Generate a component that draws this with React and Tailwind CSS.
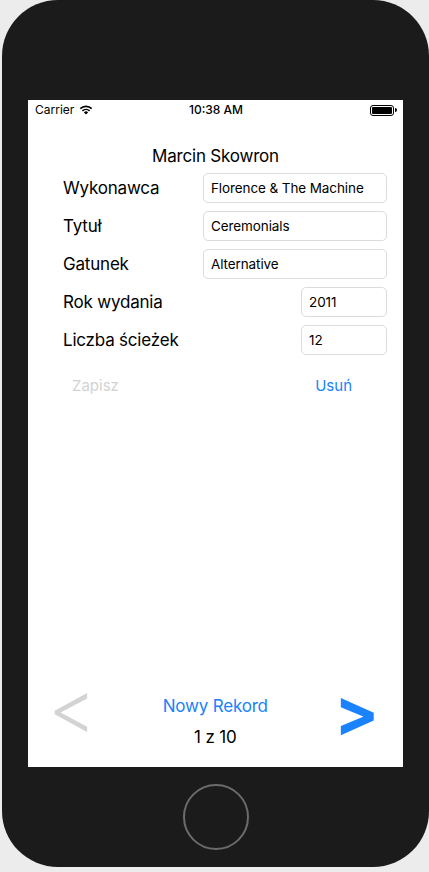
const rows = [
  { label: 'Wykonawca', value: 'Florence & The Machine', wide: true },
  { label: 'Tytuł', value: 'Ceremonials', wide: true },
  { label: 'Gatunek', value: 'Alternative', wide: true },
  { label: 'Rok wydania', value: '2011', wide: false },
  { label: 'Liczba ścieżek', value: '12', wide: false },
]

function Wifi() {
  return (
    <svg width="14" height="10" viewBox="0 0 14 10">
      <path d="M7 9.6 L4.9 7.4 A3 3 0 0 1 9.1 7.4 Z" fill="#000" />
      <path d="M3.4 5.9 A5.2 5.2 0 0 1 10.6 5.9" stroke="#000" strokeWidth="1.6" fill="none" />
      <path d="M1.3 3.7 A8.2 8.2 0 0 1 12.7 3.7" stroke="#000" strokeWidth="1.6" fill="none" />
    </svg>
  )
}

function Battery() {
  return (
    <div className="flex items-center">
      <div className="w-[24px] h-[11px] rounded-[3px] border border-black p-[1px]">
        <div className="w-full h-full bg-black rounded-[1px]" />
      </div>
      <div className="w-[1.5px] h-[4px] bg-black ml-[1px] rounded-r-sm" />
    </div>
  )
}

export default function App() {
  return (
    <div
      className="w-[429px] h-[872px] bg-[#ececec] overflow-hidden"
      style={{ fontFamily: 'Inter, "Noto Sans", sans-serif' }}
    >
      <div className="ml-[2px] w-[427px] h-[867px] rounded-[56px] bg-[#1b1b1b] pt-[100px] pl-[26px] flex flex-col">
        <div className="w-[375px] h-[667px] bg-white flex flex-col">
          {/* status bar */}
          <div className="h-[20px] flex items-center justify-between pl-[7px] pr-[6px] text-[12px] text-black">
            <div className="flex items-center gap-[5px] w-[120px]">
              <span>Carrier</span>
              <Wifi />
            </div>
            <span className="font-medium">10:38 AM</span>
            <div className="w-[120px] flex justify-end">
              <Battery />
            </div>
          </div>

          <div className="mt-[26px] text-center text-[17px] tracking-[-0.2px] text-black leading-[20px]">Marcin Skowron</div>

          <div className="mt-[7px] flex flex-col gap-[8px] pl-[35px] pr-[16px]">
            {rows.map((r) => (
              <div key={r.label} className="flex items-center justify-between h-[30px]">
                <span className="text-[17px] tracking-[-0.2px] text-black pt-[1px]">{r.label}</span>
                <div
                  className={`${r.wide ? 'w-[184px]' : 'w-[86px]'} h-[30px] rounded-[5px] border border-[#dcdcdc] flex items-center px-[7px] text-[13.5px] tracking-[-0.1px] text-black`}
                >
                  {r.value}
                </div>
              </div>
            ))}
          </div>

          <div className="mt-[21px] flex justify-between pl-[44px] pr-[51px] text-[15px] leading-[20px]">
            <span className="text-[#d2d2d2]">Zapisz</span>
            <span className="text-[#1a82fb]">Usuń</span>
          </div>

          <div className="flex-1" />

          <div className="h-[80px] flex items-start justify-between pl-[20px] pr-[24px]">
            <span className="text-[74px] font-light text-[#d3d3d3] leading-[40px]">&lt;</span>
            <div className="mt-[9px] flex flex-col items-center gap-[11px] text-[17px] leading-[20px] tracking-[-0.2px]">
              <span className="text-[#1a82fb]">Nowy Rekord</span>
              <span className="text-black">1 z 10</span>
            </div>
            <span className="text-[66px] font-bold text-[#1a82fb] leading-[40px] mt-[5px]">&gt;</span>
          </div>
        </div>

        <div className="flex-1 flex items-center justify-center pr-[26px]">
          <div className="w-[66px] h-[66px] rounded-full border-2 border-[#6b6b6b]" />
        </div>
      </div>
    </div>
  )
}
